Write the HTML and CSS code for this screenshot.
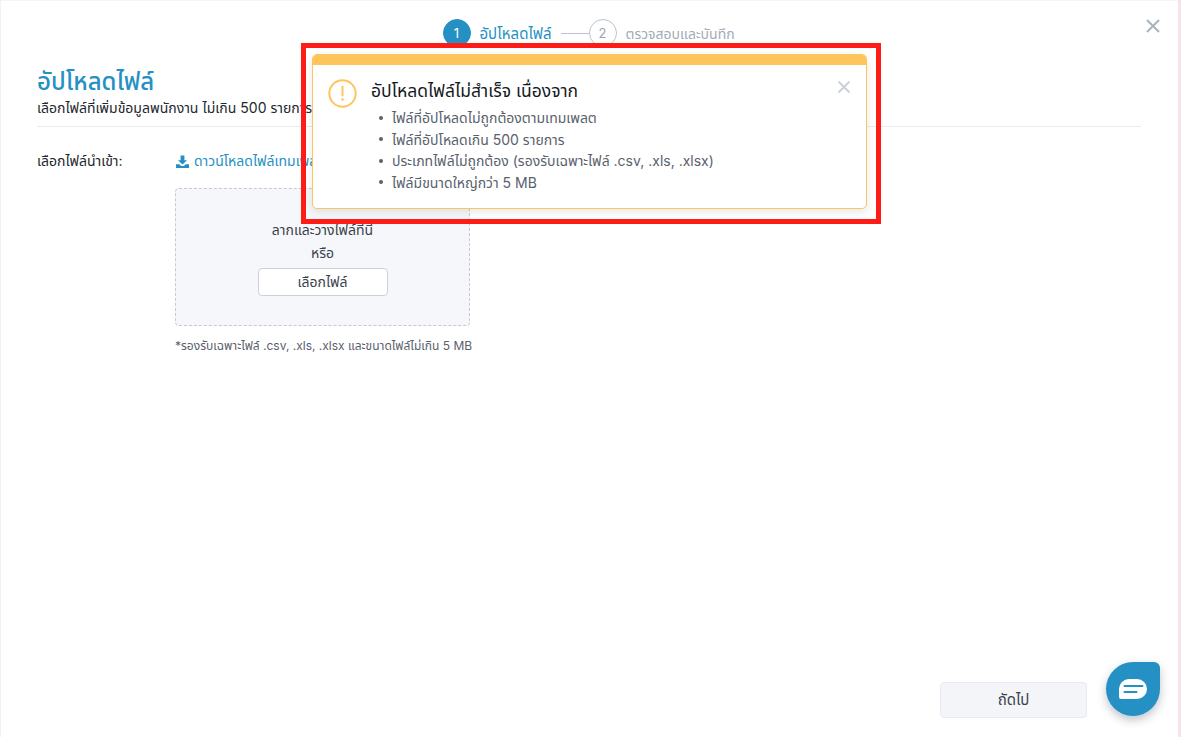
FILE: index.html
```html
<!DOCTYPE html>
<html lang="th">
<head>
  <meta charset="UTF-8" />
  <meta name="viewport" content="width=device-width, initial-scale=1.0"/>
  <title>อัปโหลดไฟล์</title>
  <link rel="stylesheet" href="styles.css">
</head>
<body>

<div class="modal">
  <!-- Stepper -->
  <div class="stepper">
    <div class="step-circle active">1</div>
    <div class="step-label active">อัปโหลดไฟล์</div>
    <div class="step-line"></div>
    <div class="step-circle">2</div>
    <div class="step-label">ตรวจสอบและบันทึก</div>
  </div>

  <button class="close-btn" aria-label="ปิด">
    <svg width="16" height="16" viewBox="0 0 16 16"><path d="M2 2 L14 14 M14 2 L2 14" stroke="#a9b2bf" stroke-width="2" fill="none"/></svg>
  </button>

  <!-- Header -->
  <div class="page-head">
    <h1 class="page-title">อัปโหลดไฟล์</h1>
    <p class="page-sub">เลือกไฟล์ที่เพิ่มข้อมูลพนักงาน ไม่เกิน 500 รายการ</p>
  </div>

  <!-- Form -->
  <div class="form-row">
    <div class="form-label">เลือกไฟล์นำเข้า:</div>
    <div class="form-body">
      <a class="template-link" href="#">
        <svg width="13" height="13" viewBox="0 0 13 13"><path d="M4.600 0.500h3.800v4.700h2.600L6.500 9.400 2 5.200h2.600z M0 9.200h3.200l2 1.800h2.600l2-1.800H13V13H0z" fill="#2590c3"/></svg>
        ดาวน์โหลดไฟล์เทมเพลต
      </a>
      <div class="dropzone">
        <div class="drop-text">ลากและวางไฟล์ที่นี่</div>
        <div class="drop-or">หรือ</div>
        <button class="pick-btn">เลือกไฟล์</button>
      </div>
      <div class="note">*รองรับเฉพาะไฟล์ .csv, .xls, .xlsx และขนาดไฟล์ไม่เกิน 5 MB</div>
    </div>
  </div>

  <div class="modal-footer">
    <button class="next-btn">ถัดไป</button>
  </div>
</div>

<!-- Toast + highlight frame -->
<div class="highlight">
  <div class="toast">
    <div class="toast-bar"></div>
    <div class="toast-body">
      <svg class="toast-icon" width="29" height="29" viewBox="0 0 29 29">
        <circle cx="14.500" cy="14.500" r="13.200" fill="none" stroke="#fec55b" stroke-width="2"/>
        <path d="M14.500 7.500v9" stroke="#fec55b" stroke-width="2" stroke-linecap="round"/>
        <circle cx="14.500" cy="20.500" r="1.300" fill="#fec55b"/>
      </svg>
      <div class="toast-text">
        <div class="toast-title">อัปโหลดไฟล์ไม่สำเร็จ เนื่องจาก</div>
        <ul class="toast-list">
          <li>ไฟล์ที่อัปโหลดไม่ถูกต้องตามเทมเพลต</li>
          <li>ไฟล์ที่อัปโหลดเกิน 500 รายการ</li>
          <li>ประเภทไฟล์ไม่ถูกต้อง (รองรับเฉพาะไฟล์ .csv, .xls, .xlsx)</li>
          <li>ไฟล์มีขนาดใหญ่กว่า 5 MB</li>
        </ul>
      </div>
      <svg class="toast-close" width="14" height="14" viewBox="0 0 14 14"><path d="M1.500 1.500 L12.500 12.500 M12.500 1.500 L1.500 12.500" stroke="#ccd1d8" stroke-width="2" fill="none"/></svg>
    </div>
  </div>
</div>

<!-- Chat bubble -->
<div class="chat-fab">
  <svg width="28" height="20" viewBox="0 0 28 20">
    <path d="M10 0h8a10 10 0 0 1 0 20H2a2 2 0 0 1-2-2V10A10 10 0 0 1 10 0z" fill="#fff"/>
    <path d="M5.500 7h18M5.500 13h12" stroke="#2590c3" stroke-width="2" stroke-linecap="round"/>
  </svg>
</div>

</body>
</html>
```

FILE: styles.css
```css
* { box-sizing: border-box; margin: 0; padding: 0; }

html, body { height: 100%; }

body {
  font-family: Inter, "Noto Sans", "Noto Sans Thai", "DejaVu Sans", sans-serif;
  font-size: 14px;
  color: #2f3640;
  background: #f6e4e6;
  overflow: hidden;
}

.modal {
  position: relative;
  width: 1178px;
  height: 737px;
  background: #fff;
  border-left: 1px solid #f1f2f4;
  border-top: 1px solid #f4f5f7;
  display: flex;
  flex-direction: column;
  padding: 18px 37px 19px 36px;
}

.stepper {
  display: flex;
  align-items: center;
  justify-content: center;
  height: 28px;
}

.step-circle {
  width: 28px;
  height: 28px;
  border-radius: 50%;
  border: 1px solid #bcc3ce;
  color: #9aa3af;
  display: flex;
  align-items: center;
  justify-content: center;
  font-size: 13px;
}

.step-circle.active { background: #2590c3; border-color: #2590c3; color: #fff; }

.step-label { color: #a3abb6; font-size: 14px; margin: 2px 0 0 9px; width: 110px; white-space: nowrap; }
.step-label.active { color: #2590c3; font-size: 15px; width: 72px; }

.step-line { width: 28px; height: 1px; background: #bcc3ce; margin-left: 9px; }

.close-btn {
  position: absolute;
  top: 17px;
  left: 1144px;
  background: none;
  border: none;
  line-height: 0;
}

.page-head {
  margin-top: 20px;
  padding-bottom: 7px;
  border-bottom: 1px solid #e9ebf0;
}

.page-title {
  font-size: 24px;
  font-weight: 500;
  line-height: 30px;
  color: #2590c3;
}

.page-sub {
  font-size: 14px;
  line-height: 22px;
  color: #22272e;
}

.form-row { display: flex; margin-top: 23px; flex: 1; }

.form-label { width: 138px; font-size: 14px; line-height: 22px; color: #22272e; }

.form-body { width: 298px; }

.template-link {
  display: flex;
  align-items: center;
  gap: 5px;
  margin-left: 1px;
  font-size: 14px;
  line-height: 22px;
  color: #2590c3;
  text-decoration: none;
  white-space: nowrap;
}

.dropzone {
  width: 295px;
  height: 138px;
  margin-top: 16px;
  background: #f6f7fa;
  border: 1px dashed #c6cad2;
  border-radius: 4px;
  display: flex;
  flex-direction: column;
  align-items: center;
  padding-top: 29px;
  color: #3b424c;
}

.drop-text, .drop-or { line-height: 23px; font-size: 14px; }

.pick-btn {
  width: 130px;
  height: 28px;
  margin-top: 4px;
  background: #fff;
  border: 1px solid #cdd1da;
  border-radius: 4px;
  font: inherit;
  color: #3b424c;
}

.note {
  margin-top: 12px;
  font-size: 12px;
  line-height: 16px;
  color: #59616c;
  white-space: nowrap;
}

.modal-footer { display: flex; justify-content: flex-end; padding-right: 54px; }

.next-btn {
  width: 147px;
  height: 36px;
  background: #f4f5f9;
  border: 1px solid #e8eaef;
  border-radius: 4px;
  font: inherit;
  font-size: 15px;
  color: #3b424c;
}

.highlight {
  position: absolute;
  left: 301px;
  top: 43px;
  width: 580px;
  height: 181px;
  border: 5px solid #fe1c17;
  padding: 6px;
}

.toast {
  width: 555px;
  height: 155px;
  background: #fff;
  border: 1px solid #fec55b;
  border-radius: 5px;
  overflow: hidden;
  box-shadow: 0 3px 8px rgba(50, 60, 80, 0.12);
}

.toast-bar { height: 10px; background: #fec55b; }

.toast-body { position: relative; display: flex; padding: 14px 16px 0 15px; }

.toast-icon { flex: none; margin-right: 14px; }

.toast-title { font-size: 17.500px; line-height: 24px; color: #16191d; }

.toast-list { list-style: none; margin-top: 4px; padding-left: 8px; }

.toast-list li {
  display: flex;
  align-items: center;
  font-size: 14px;
  line-height: 21.500px;
  color: #59616c;
  white-space: nowrap;
}

.toast-list li::before {
  content: "";
  width: 4px;
  height: 4px;
  border-radius: 50%;
  background: #59616c;
  margin-right: 9px;
}

.toast-close { position: absolute; top: 15px; right: 15px; }

.chat-fab {
  position: absolute;
  left: 1106px;
  top: 662px;
  width: 54px;
  height: 54px;
  background: #2590c3;
  border-radius: 27px 6px 27px 27px;
  box-shadow: 0 4px 10px rgba(40, 60, 80, 0.3);
  display: flex;
  align-items: center;
  justify-content: center;
}
```
